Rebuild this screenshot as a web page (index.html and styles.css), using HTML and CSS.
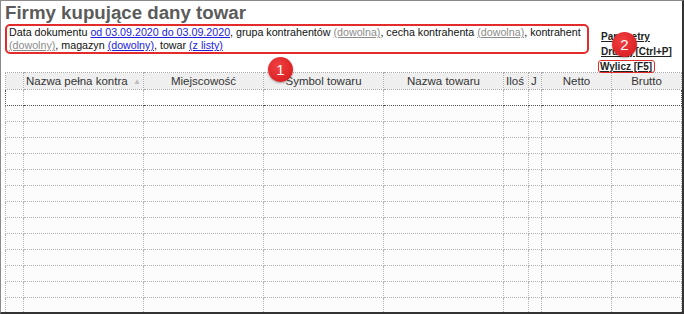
FILE: index.html
```html
<!DOCTYPE html>
<html lang="pl">
<head>
    <meta charset="UTF-8">
    <title>Firmy kupujące dany towar</title>
    <link rel="stylesheet" href="styles.css">
</head>
<body>
<div class="page">
    <h1>Firmy kupujące dany towar</h1>
    <div class="top">
        <div class="filters">
            Data dokumentu <a href="#" class="on">od 03.09.2020 do 03.09.2020</a>, grupa kontrahentów <a href="#" class="off">(dowolna)</a>, cecha kontrahenta <a href="#" class="off">(dowolna)</a>, kontrahent <a href="#" class="off">(dowolny)</a>, magazyn <a href="#" class="on">(dowolny)</a>, towar <a href="#" class="on">(z listy)</a>
        </div>
        <div class="actions">
            <a href="#">Parametry</a>
            <a href="#">Drukuj [Ctrl+P]</a>
            <a href="#" class="marked">Wylicz [F5]</a>
        </div>
    </div>

    <table class="grid">
        <colgroup>
            <col style="width:18px"><col style="width:120px"><col style="width:120px"><col style="width:120px"><col style="width:120px"><col style="width:25px"><col style="width:13px"><col style="width:70px"><col style="width:70px">
        </colgroup>
        <thead>
        <tr>
            <th></th>
            <th class="left">Nazwa pełna kontra<span class="sort">▲</span></th>
            <th>Miejscowość</th>
            <th>Symbol towaru</th>
            <th>Nazwa towaru</th>
            <th class="left">Iloś</th>
            <th class="left">J</th>
            <th>Netto</th>
            <th>Brutto</th>
        </tr>
        </thead>
        <tbody id="rows"></tbody>
    </table>

    <span class="badge one">1</span>
    <span class="badge two">2</span>
</div>

<script>
    const rows = document.getElementById("rows");
    for (let i = 0; i < 14; i++) {
        const tr = document.createElement("tr");
        if (i === 0) tr.className = "current";
        tr.innerHTML = "<td></td>".repeat(9);
        rows.appendChild(tr);
    }
</script>
</body>
</html>
```

FILE: styles.css
```css
body {
    margin: 0;
    font-family: "Liberation Sans", Arial, sans-serif;
}

.page {
    position: relative;
    width: 684px;
    height: 314px;
    box-sizing: border-box;
    padding: 0 0 0 4px;
    border: 1px solid #8a8a8a;
    border-right: 2px solid #333;
    border-bottom: 2px solid #333;
    overflow: hidden;
    background: #fff;
}

h1 {
    margin: 0;
    height: 23px;
    font-size: 18.7px;
    line-height: 24px;
    font-weight: bold;
    color: #5b5b5b;
}

.top {
    display: flex;
    height: 48px;
}

.filters {
    width: 578px;
    height: 26px;
    padding: 0 0 0 2px;
    border: 2px solid #e32b2b;
    border-radius: 5px;
    font-size: 10.7px;
    line-height: 13px;
    color: #111;
}

.filters a {
    text-decoration: underline;
}

.filters a.on {
    color: #2222dd;
}

.filters a.off {
    color: #8c8c8c;
}

.actions {
    display: flex;
    flex-direction: column;
    align-items: flex-start;
    margin-left: 12px;
    padding-top: 6px;
}

.actions a {
    font-size: 10px;
    font-weight: bold;
    line-height: 14.5px;
    color: #222;
    text-decoration: underline;
}

.actions a.marked {
    margin-left: -3px;
    margin-top: 1px;
    padding: 0 2px 0 1px;
    line-height: 11px;
    border: 1.5px solid #e32b2b;
    border-radius: 3px;
}

.grid {
    border-collapse: collapse;
    table-layout: fixed;
    width: 676px;
    font-size: 11.5px;
    color: #333;
}

.grid th {
    height: 16px;
    padding: 0 2px;
    background: #efefef;
    font-weight: normal;
    text-align: center;
    white-space: nowrap;
    overflow: hidden;
    border: 1px dotted #a8a8a8;
}

.grid th.left {
    text-align: left;
}

.sort {
    float: right;
    font-size: 8px;
    color: #bbb;
    margin-top: 2px;
}

.grid td {
    height: 15px;
    padding: 0;
    border: 1px dotted #b4b4b4;
    background: #fcfcfc;
}

.grid tr.current td {
    background: #fff;
    border-top-color: #555;
    border-bottom-color: #555;
}

.grid tr.current td:first-child {
    border-left-color: #555;
}

.grid tr.current td:last-child {
    border-right-color: #555;
}

.badge {
    position: absolute;
    width: 25px;
    height: 25px;
    border-radius: 50%;
    background: radial-gradient(circle at 40% 35%, #f04040, #d4161c);
    box-shadow: 0 1px 2px rgba(0, 0, 0, 0.35);
    color: #fff;
    font-size: 15px;
    line-height: 25px;
    text-align: center;
}

.badge.one {
    left: 267px;
    top: 56px;
}

.badge.two {
    left: 611px;
    top: 31px;
}
```
